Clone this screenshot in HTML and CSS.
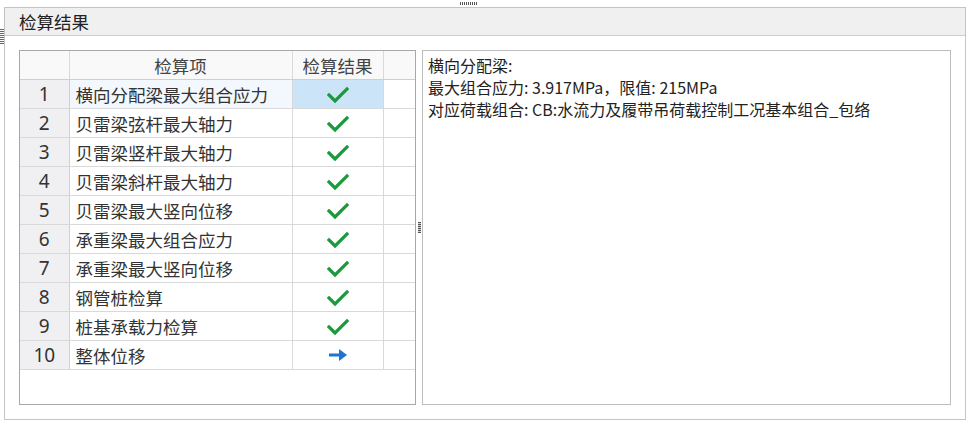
FILE: index.html
```html
<!DOCTYPE html>
<html>
<head>
<meta charset="utf-8">
<link rel="stylesheet" href="styles.css">
</head>
<body>
<div class="topstrip"><span class="grip-h"></span></div>
<span class="grip-left"></span>
<div class="panel">
  <div class="panel-head">检算结果</div>
  <div class="panel-body">
    <div class="grid-box">
      <table class="grid">
        <colgroup><col class="c1"><col class="c2"><col class="c3"><col></colgroup>
        <thead>
          <tr><th></th><th>检算项</th><th>检算结果</th><th></th></tr>
        </thead>
        <tbody>
          <tr class="sel"><td class="num">1</td><td class="item">横向分配梁最大组合应力</td><td class="res"><svg class="ok" viewBox="0 0 22 18"><polyline points="2,9 8,15 20,3"/></svg></td><td></td></tr>
          <tr><td class="num">2</td><td class="item">贝雷梁弦杆最大轴力</td><td class="res"><svg class="ok" viewBox="0 0 22 18"><polyline points="2,9 8,15 20,3"/></svg></td><td></td></tr>
          <tr><td class="num">3</td><td class="item">贝雷梁竖杆最大轴力</td><td class="res"><svg class="ok" viewBox="0 0 22 18"><polyline points="2,9 8,15 20,3"/></svg></td><td></td></tr>
          <tr><td class="num">4</td><td class="item">贝雷梁斜杆最大轴力</td><td class="res"><svg class="ok" viewBox="0 0 22 18"><polyline points="2,9 8,15 20,3"/></svg></td><td></td></tr>
          <tr><td class="num">5</td><td class="item">贝雷梁最大竖向位移</td><td class="res"><svg class="ok" viewBox="0 0 22 18"><polyline points="2,9 8,15 20,3"/></svg></td><td></td></tr>
          <tr><td class="num">6</td><td class="item">承重梁最大组合应力</td><td class="res"><svg class="ok" viewBox="0 0 22 18"><polyline points="2,9 8,15 20,3"/></svg></td><td></td></tr>
          <tr><td class="num">7</td><td class="item">承重梁最大竖向位移</td><td class="res"><svg class="ok" viewBox="0 0 22 18"><polyline points="2,9 8,15 20,3"/></svg></td><td></td></tr>
          <tr><td class="num">8</td><td class="item">钢管桩检算</td><td class="res"><svg class="ok" viewBox="0 0 22 18"><polyline points="2,9 8,15 20,3"/></svg></td><td></td></tr>
          <tr><td class="num">9</td><td class="item">桩基承载力检算</td><td class="res"><svg class="ok" viewBox="0 0 22 18"><polyline points="2,9 8,15 20,3"/></svg></td><td></td></tr>
          <tr><td class="num">10</td><td class="item">整体位移</td><td class="res"><svg class="arrow" viewBox="0 0 20 14"><rect x="1" y="5.5" width="12" height="3"/><polygon points="11,1 19,7 11,13"/></svg></td><td></td></tr>
        </tbody>
      </table>
    </div>
    <div class="splitter"><span class="grip-v"></span></div>
    <div class="detail">
      <div>横向分配梁:</div>
      <div>最大组合应力: 3.917MPa，限值: 215MPa</div>
      <div>对应荷载组合: CB:水流力及履带吊荷载控制工况基本组合_包络</div>
    </div>
  </div>
</div>
</body>
</html>
```

FILE: styles.css
```css
html, body {
  margin: 0;
  padding: 0;
  background: #ffffff;
  font-family: "Noto Sans CJK SC", "Noto Sans", sans-serif;
  font-size: 16px;
  color: #333;
}
.topstrip {
  height: 7px;
  display: flex;
  justify-content: center;
  align-items: flex-start;
}
.grip-h {
  margin-top: 2px;
  margin-left: -30px;
  width: 17px;
  height: 3px;
  background: repeating-linear-gradient(90deg, #555 0 1px, transparent 1px 2px);
}
.grip-left {
  position: absolute;
  left: 0;
  top: 29px;
  width: 4px;
  height: 15px;
  background: repeating-linear-gradient(180deg, #666 0 1px, transparent 1px 2px);
}
.panel {
  margin: 0 1px 0 4px;
  height: 411px;
  border: 1px solid #c4c4c4;
  display: flex;
  flex-direction: column;
  box-sizing: content-box;
}
.panel-head {
  height: 27px;
  background: #f0f0f0;
  border-bottom: 1px solid #cfcfcf;
  padding-left: 14px;
  font-size: 17.5px;
  line-height: 27px;
  color: #222;
}
.panel-body {
  flex: 1;
  display: flex;
  padding: 14px 14px 14px 14px;
}
.grid-box {
  width: 395px;
  height: 353px;
  border: 1px solid #a8a8a8;
  background: #fff;
  overflow: hidden;
}
.grid {
  border-collapse: collapse;
  table-layout: fixed;
  width: 395px;
}
.grid col.c1 { width: 49px; }
.grid col.c2 { width: 223px; }
.grid col.c3 { width: 91px; }
.grid th, .grid td {
  height: 28px;
  padding: 0;
  border: 1px solid #d9d9d9;
  font-size: 17.5px;
  font-weight: normal;
  white-space: nowrap;
  overflow: hidden;
}
.grid tr:first-child th { border-top: none; }
.grid th:first-child, .grid td:first-child { border-left: none; }
.grid th:last-child, .grid td:last-child { border-right: none; }
.grid th {
  background: #f9f9f9;
  color: #444;
  text-align: center;
  border-bottom: 1px solid #cfcfcf;
}
.grid td.num {
  background: #f0f0f2;
  text-align: center;
  color: #333;
  font-family: "Noto Sans", sans-serif;
  font-size: 19px;
  border-right: 1px solid #cfcfcf;
}
.grid td.item {
  padding-left: 6px;
  color: #333;
}
.grid td.res {
  text-align: center;
  vertical-align: middle;
}
.grid tr.sel td.item { background: #f2f8fd; }
.grid tr.sel td.res { background: #cce4f7; }
.ok {
  width: 22px;
  height: 18px;
  display: block;
  margin: 1px auto 0;
}
.ok polyline {
  fill: none;
  stroke: #1a9a3c;
  stroke-width: 3.2;
  stroke-linecap: square;
}
.arrow {
  width: 20px;
  height: 14px;
  display: block;
  margin: 0 auto;
  fill: #1e74cf;
}
.splitter {
  width: 6px;
  display: flex;
  align-items: center;
  justify-content: center;
}
.grip-v {
  width: 3px;
  height: 11px;
  background: repeating-linear-gradient(180deg, #555 0 1px, #ccc 1px 2px);
}
.detail {
  flex: 1;
  height: 347px;
  border: 1px solid #bdbdbd;
  padding: 3px 5px;
  font-size: 16px;
  line-height: 22px;
  color: #222;
  white-space: nowrap;
}
```
